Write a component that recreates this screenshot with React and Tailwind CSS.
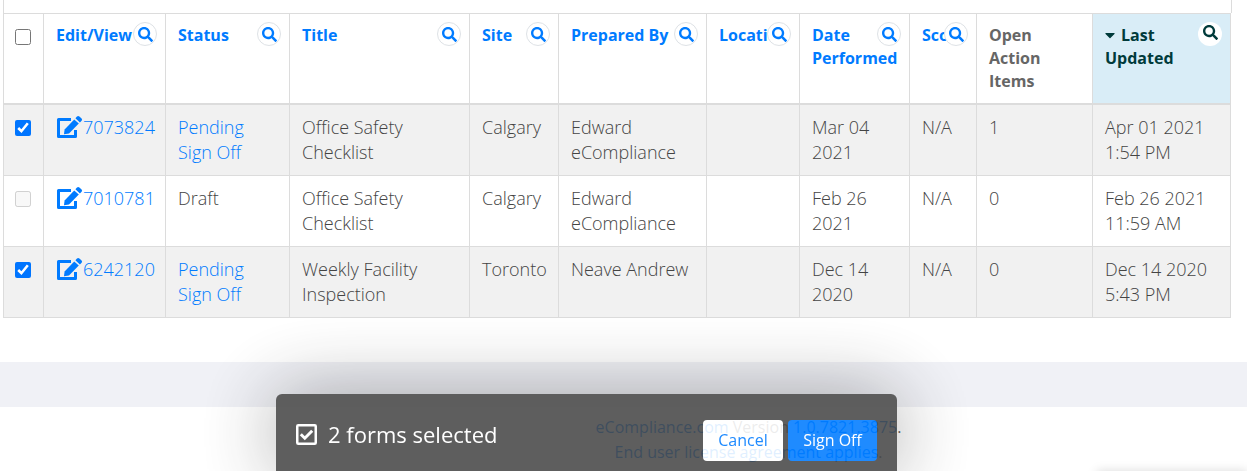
import React, { useState } from 'react';
import { FaSearch, FaCaretDown } from 'react-icons/fa';

const columns = [
  { key: 'status', label: 'Status', width: 'w-[124px]', searchable: true },
  { key: 'title', label: 'Title', width: 'w-[180px]', searchable: true },
  { key: 'site', label: 'Site', width: 'w-[89px]', searchable: true },
  { key: 'preparedBy', label: 'Prepared By', width: 'w-[148px]', searchable: true },
  { key: 'location', label: 'Location', width: 'w-[93px]', searchable: true },
  { key: 'performed', label: 'Date Performed', width: 'w-[110px]', searchable: true },
  { key: 'score', label: 'Score', width: 'w-[67px]', searchable: true },
  { key: 'openItems', label: 'Open Action Items', width: 'w-[116px]', searchable: false },
  { key: 'updated', label: 'Last Updated', width: 'w-[138px]', searchable: true, sorted: true }
];

const forms = [
  {
    id: '7073824',
    status: 'Pending Sign Off',
    title: 'Office Safety Checklist',
    site: 'Calgary',
    preparedBy: 'Edward eCompliance',
    location: '',
    performed: 'Mar 04 2021',
    score: 'N/A',
    openItems: 1,
    updated: 'Apr 01 2021 1:54 PM'
  },
  {
    id: '7010781',
    status: 'Draft',
    title: 'Office Safety Checklist',
    site: 'Calgary',
    preparedBy: 'Edward eCompliance',
    location: '',
    performed: 'Feb 26 2021',
    score: 'N/A',
    openItems: 0,
    updated: 'Feb 26 2021 11:59 AM'
  },
  {
    id: '6242120',
    status: 'Pending Sign Off',
    title: 'Weekly Facility Inspection',
    site: 'Toronto',
    preparedBy: 'Neave Andrew',
    location: '',
    performed: 'Dec 14 2020',
    score: 'N/A',
    openItems: 0,
    updated: 'Dec 14 2020 5:43 PM'
  }
];

const selectableIds = forms.filter((f) => f.status !== 'Draft').map((f) => f.id);

const EditIcon = () => (
  <svg viewBox="0 0 27 24" className="w-[27px] h-6 shrink-0" fill="none" aria-hidden="true">
    <path d="M15 4.5H2.5V21.5H19.5V15" stroke="currentColor" strokeWidth="3" strokeLinejoin="round" />
    <path d="M8.6 14.6L18.2 4.4L22.8 8.6L13 18.4L8 19.2Z" fill="currentColor" />
    <path d="M19.4 3.2L21 1.4Q22.2 .4 23.4 1.5L25.6 3.5Q26.6 4.7 25.6 5.8L23.9 7.4Z" fill="currentColor" />
  </svg>
);

const CheckedBoxIcon = () => (
  <svg viewBox="0 0 21 21" className="size-[21px]" fill="none" aria-hidden="true">
    <rect x="1.25" y="1.25" width="18.5" height="18.5" rx="1" stroke="currentColor" strokeWidth="2.5" />
    <path d="M4.8 10.3L8.8 14.2L16.2 6.8" stroke="currentColor" strokeWidth="3" />
  </svg>
);

const CheckBox = ({ label, ...props }) => (
  <input
    type="checkbox"
    aria-label={label}
    className="block size-4 accent-[#0075ff]"
    {...props}
  />
);

const SearchButton = ({ label, sorted }) => (
  <button
    type="button"
    aria-label={`Search ${label}`}
    className={`absolute top-2 right-2 size-6 rounded-full bg-white flex justify-center ${
      sorted ? 'items-start pt-[3px] text-[#003b3b]' : 'items-center border border-[#dee2e6] text-[#007bff]'
    }`}
  >
    <FaSearch className="size-[15px]" />
  </button>
);

const App = () => {
  const [selected, setSelected] = useState(selectableIds);

  const toggle = (id) => {
    setSelected((prev) => (prev.includes(id) ? prev.filter((x) => x !== id) : [...prev, id]));
  };

  return (
    <div className="min-h-screen bg-white font-['Open_Sans',sans-serif] text-base leading-[25px] text-[#666]">
      <main className="pl-[3px] pr-[15px] pb-11">
        <div className="h-[13px] border-x border-[#dcdcdc]" />
        <div className="pr-px">
          <table className="w-full table-fixed border-collapse">
            <thead className="leading-[23px]">
              <tr className="text-left align-top">
                <th className="w-10 border border-b-2 border-[#dcdcdc] pl-[11px] pt-[15px]">
                  <CheckBox label="Select all forms" />
                </th>
                <th className="relative w-[122px] border border-b-2 border-[#dcdcdc] pl-3 py-2.5 font-bold">
                  <a href="#edit" className="text-[#007bff]">Edit/View</a>
                  <SearchButton label="Edit/View" />
                </th>
                {columns.map((col) => (
                  <th
                    key={col.key}
                    className={`relative ${col.width} border border-b-2 border-[#dcdcdc] pl-3 pr-2.5 py-2.5 font-bold ${
                      col.sorted ? 'bg-[#d9edf7]' : ''
                    }`}
                  >
                    {col.searchable ? (
                      <a href={`#${col.key}`} className={col.sorted ? 'text-[#003b3b]' : 'text-[#007bff]'}>
                        {col.sorted && <FaCaretDown className="inline size-4 -ml-[3px] mr-[3px] -mt-1" />}
                        {col.label}
                      </a>
                    ) : (
                      <span className="block w-16">{col.label}</span>
                    )}
                    {col.searchable && <SearchButton label={col.label} sorted={col.sorted} />}
                  </th>
                ))}
              </tr>
            </thead>
            <tbody className="text-lg leading-[25px] font-light text-[#444]">
              {forms.map((form) => (
                <tr key={form.id} className="align-top odd:bg-[#f1f1f1]">
                  <td className="border border-[#dcdcdc] pl-[11px] pt-[15px]">
                    <CheckBox
                      label={`Select form ${form.id}`}
                      checked={selected.includes(form.id)}
                      disabled={form.status === 'Draft'}
                      onChange={() => toggle(form.id)}
                    />
                  </td>
                  <td className="border border-[#dcdcdc] pl-3 pr-2.5 py-2.5">
                    <a href={`#form-${form.id}`} className="flex items-start text-[#007bff]">
                      <EditIcon />
                      {form.id}
                    </a>
                  </td>
                  {columns.map((col) => (
                    <td key={col.key} className="border border-[#dcdcdc] pl-3 pr-2.5 py-2.5">
                      {col.key === 'status' && form.status !== 'Draft' ? (
                        <a href={`#sign-${form.id}`} className="text-[#007bff]">{form.status}</a>
                      ) : (
                        form[col.key]
                      )}
                    </td>
                  ))}
                </tr>
              ))}
            </tbody>
          </table>
        </div>
      </main>

      <div className="h-[45px] bg-[#f0f1f6]" />

      <footer className="pl-[250px] pt-2 text-center">
        <p>
          <a href="#home" className="text-[#007bff]">eCompliance.com</a> Version{' '}
          <a href="#version" className="text-[#007bff]">1.0.7821.3875</a>.
        </p>
        <p>
          <a href="#license" className="text-[#007bff]">End user license agreement applies</a>.
        </p>
      </footer>

      {/* Selection bar */}
      <div className="fixed bottom-0 left-[276px] w-[621px] flex items-start justify-between rounded-t-md bg-[#484848] pt-[26px] pb-2.5 px-5 text-white opacity-[.88] shadow-[0_0_80px_rgba(0,0,0,.4)]">
        <div className="flex items-center gap-[11px] text-[22px] leading-[29px]">
          <CheckedBoxIcon />
          <span>{selected.length} forms selected</span>
        </div>
        <div className="flex gap-[5px]">
          <button type="button" className="h-[41px] w-20 rounded-sm bg-white text-[#007bff]" onClick={() => setSelected([])}>
            Cancel
          </button>
          <button type="button" className="h-[41px] w-[89px] rounded-sm bg-[#007bff] text-white">
            Sign Off
          </button>
        </div>
      </div>

      {/* Collapsed help widget, only its shadow rises above the window edge */}
      <div className="fixed top-full right-0 w-[150px] h-10 shadow-[0_0_10px_rgba(0,0,0,.15)]" />
    </div>
  );
};

export default App;
